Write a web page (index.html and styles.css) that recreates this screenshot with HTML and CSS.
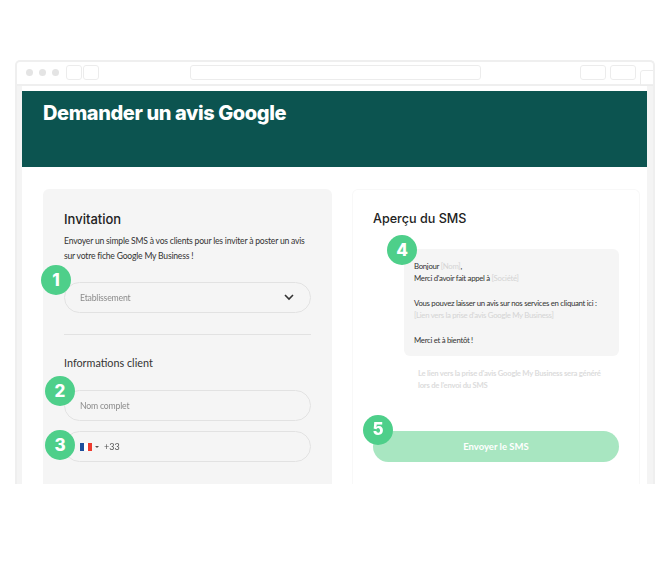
FILE: index.html
```html
<!DOCTYPE html>
<html lang="fr">
<head>
<meta charset="utf-8">
<title>Demander un avis Google</title>
<link rel="stylesheet" href="styles.css">
</head>
<body>
<div class="frame">
  <div class="chrome">
    <span class="dot"></span><span class="dot"></span><span class="dot"></span>
    <span class="nav first"></span><span class="nav"></span>
    <span class="url"></span>
    <span class="tool"></span><span class="tool"></span>
    <span class="corner"></span>
  </div>
  <div class="page">
    <div class="banner"><h1>Demander un avis Google</h1></div>
    <div class="columns">
      <section class="card left">
        <h2>Invitation</h2>
        <p class="intro">Envoyer un simple SMS à vos clients pour les inviter à poster un avis<br>sur votre fiche Google My Business !</p>
        <div class="field select">
          <span class="placeholder">Etablissement</span>
          <svg class="chev" width="10" height="7" viewBox="0 0 10 7"><path d="M1 1l4 4 4-4" fill="none" stroke="#333" stroke-width="1.6"/></svg>
          <span class="badge b1">1</span>
        </div>
        <hr class="divider">
        <h3>Informations client</h3>
        <div class="field name">
          <span class="placeholder">Nom complet</span>
          <span class="badge b2">2</span>
        </div>
        <div class="field phone">
          <svg class="flag" width="12" height="8" viewBox="0 0 12 8"><rect width="4" height="8" fill="#1c4f9c"/><rect x="4" width="4" height="8" fill="#fff"/><rect x="8" width="4" height="8" fill="#ee3b2f"/></svg>
          <span class="caret"></span>
          <span class="dial">+33</span>
          <span class="badge b3">3</span>
        </div>
      </section>
      <section class="card right">
        <h2 class="preview-title">Aperçu du SMS</h2>
        <div class="sms">
          <span class="badge b4">4</span>
          <p>Bonjour <span class="var">[Nom]</span>,<br>Merci d'avoir fait appel à <span class="var">[Société]</span></p>
          <p>Vous pouvez laisser un avis sur nos services en cliquant ici :<br><span class="var">[Lien vers la prise d'avis Google My Business]</span></p>
          <p>Merci et à bientôt !</p>
        </div>
        <p class="note">Le lien vers la prise d'avis Google My Business sera généré<br>lors de l'envoi du SMS</p>
        <div class="send">Envoyer le SMS<span class="badge b5">5</span></div>
      </section>
    </div>
  </div>
</div>
</body>
</html>
```
FILE: styles.css
```css
* { box-sizing: border-box; }
html, body { margin: 0; background: #fff; }
body { padding: 60px 15px 0; height: 561px; overflow: hidden; font-family: "Lato", sans-serif; color: #333; }
.frame { height: 424px; border: 2px solid #efefef; border-bottom: 0; border-radius: 5px 5px 0 0; overflow: hidden; filter: blur(0.35px); }
.chrome { height: 24px; display: flex; align-items: center; border-bottom: 2px solid #efefef; padding: 0 0 2px 9px; position: relative; }
.dot { width: 7px; height: 7px; border-radius: 50%; background: #e4e4e4; margin-right: 6px; flex: none; }
.nav { width: 16px; height: 15px; border: 1.5px solid #ececec; border-radius: 3px; margin-right: 1px; flex: none; }
.nav.first { margin-left: 1px; }
.url { width: 291px; height: 15px; border: 1.5px solid #ececec; border-radius: 3px; margin-left: 90px; margin-right: 99px; flex: none; }
.tool { width: 26px; height: 15px; border: 1.5px solid #ececec; border-radius: 3px; margin-right: 4px; flex: none; }
.corner { position: absolute; right: -4px; top: 8px; width: 17px; height: 16px; border: 1.5px solid #ececec; border-radius: 3px 0 0 0; }
.page { height: 398px; background: #fff; border-left: 5px solid #f4f4f4; border-right: 6px solid #f4f4f4; padding-top: 5px; }
.banner { height: 76px; background: #0c5450; padding: 10px 21px; }
h1 { margin: 0; color: #fff; font: 800 20px/24px "Inter", sans-serif; letter-spacing: -0.4px; white-space: nowrap; }
.columns { display: grid; grid-template-columns: 289px 288px; column-gap: 20px; padding: 22px 0 0 21px; }
.card { height: 296px; border-radius: 6px 6px 0 0; }
.left { background: #f5f5f5; padding: 21px 21px 0; }
.right { border: 1px solid #f8f8f8; border-bottom: 0; padding: 20px 20px 0; }
h2 { margin: 0; font: 500 13px/18px "Inter", sans-serif; color: #222; }
.preview-title { font-size: 12.6px; }
.intro { margin: 6px 0 0; font-size: 8.6px; letter-spacing: -0.21px; line-height: 14.5px; color: #333; white-space: nowrap; }
.field { height: 31px; border: 1px solid #e2e2e2; border-radius: 16px; display: flex; align-items: center; padding-left: 15px; position: relative; font-size: 8.7px; letter-spacing: -0.2px; }
.placeholder { color: #8c8c8c; }
.select { margin-top: 19px; justify-content: space-between; padding-right: 16px; }
.chev { display: block; }
.divider { margin: 21px 0 0; border: 0; border-top: 1px solid #e2e2e2; }
h3 { margin: 21px 0 0; font: 400 10.8px/14px "Lato", sans-serif; color: #333; }
.name { margin-top: 20px; }
.phone { margin-top: 10px; }
.caret { width: 0; height: 0; margin-left: 3px; border: 2px solid transparent; border-top-color: #555; border-bottom: 0; }
.dial { margin-left: 5px; color: #555; font-size: 9px; letter-spacing: 0; }
.badge { position: absolute; width: 30px; height: 30px; border-radius: 50%; background: #4ecf8a; color: #fff; display: flex; align-items: center; justify-content: center; font: 800 17px/1 "Inter", sans-serif; letter-spacing: 0; }
.b1 { left: -24px; top: -18px; }
.b2 { left: -20px; top: -15px; }
.b3 { left: -20px; top: -2px; }
.b4 { left: -17px; top: -14px; }
.b5 { left: -10px; top: -16px; }
.sms { position: relative; width: 215px; height: 107px; margin: 21px 0 0 31px; padding: 10.5px 10px; background: #f5f5f5; border-radius: 6px; font-size: 7.8px; letter-spacing: -0.3px; line-height: 12.4px; color: #333; white-space: nowrap; }
.sms p { margin: 0 0 12.4px; }
.var { color: #d4d4d4; }
.note { margin: 10.5px 0 0 45px; font-size: 7.7px; letter-spacing: -0.25px; font-weight: 700; line-height: 12.5px; color: #dcdcdc; white-space: nowrap; }
.send { position: relative; height: 31px; width: 246px; margin-top: 39px; border-radius: 16px; background: #a8e6c1; color: #fff; font-size: 9.5px; font-weight: 700; display: flex; align-items: center; justify-content: center; }
```
